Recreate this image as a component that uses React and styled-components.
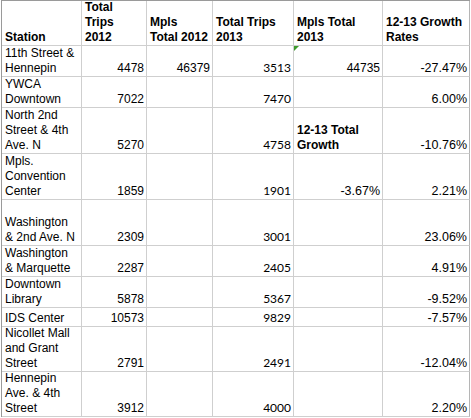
import React from "react"
import styled, { createGlobalStyle } from "styled-components"

const GlobalStyle = createGlobalStyle`
  html, body {
    margin: 0;
    padding: 0;
    background: #fff;
  }
  body {
    font-family: "Liberation Sans", Arial, sans-serif;
    color: #000;
  }
`

const columns = [80, 65, 66, 81, 89, 87]
const rowHeights = [45, 31, 31, 46, 46, 46, 31, 31, 19, 45, 45]

const header = [
  "Station",
  "Total\nTrips\n2012",
  "Mpls\nTotal 2012",
  "Total Trips\n2013",
  "Mpls Total\n2013",
  "12-13 Growth\nRates",
]

const rows = [
  ["11th Street &\nHennepin", "4478", "46379", "3513", "44735", "-27.47%"],
  ["YWCA\nDowntown", "7022", "", "7470", "", "6.00%"],
  ["North 2nd\nStreet & 4th\nAve. N", "5270", "", "4758", "12-13 Total\nGrowth", "-10.76%"],
  ["Mpls.\nConvention\nCenter", "1859", "", "1901", "-3.67%", "2.21%"],
  ["Washington\n& 2nd Ave. N", "2309", "", "3001", "", "23.06%"],
  ["Washington\n& Marquette", "2287", "", "2405", "", "4.91%"],
  ["Downtown\nLibrary", "5878", "", "5367", "", "-9.52%"],
  ["IDS Center", "10573", "", "9829", "", "-7.57%"],
  ["Nicollet Mall\nand Grant\nStreet", "2791", "", "2491", "", "-12.04%"],
  ["Hennepin\nAve. & 4th\nStreet", "3912", "", "4000", "", "2.20%"],
]

const App = () => {
  return (
    <>
      <GlobalStyle />
      <Page>
        <Sheet>
          {header.map((text, i) => (
            <Cell key={"h" + i} $bold>
              <span>{text}</span>
            </Cell>
          ))}
          {rows.map((row, r) =>
            row.map((text, c) => {
              const isLabel = c === 0 || (r === 2 && c === 4)
              return (
                <Cell
                  key={r + "-" + c}
                  $right={!isLabel}
                  $bold={r === 2 && c === 4}
                  $calibri={c === 3}
                  $percent={text.endsWith("%")}
                >
                  {r === 0 && c === 4 && <CommentMark />}
                  <span>{text}</span>
                </Cell>
              )
            })
          )}
        </Sheet>
      </Page>
    </>
  )
}

export default App

const Page = styled.div`
  padding-left: 1px;
`

const Sheet = styled.div`
  display: grid;
  grid-template-columns: ${columns.map((w) => w + "px").join(" ")};
  grid-template-rows: ${rowHeights.map((h) => h + "px").join(" ")};
  width: max-content;
  border-top: 1px solid #9a9a9a;
  border-left: 1px solid #9a9a9a;
`

const Cell = styled.div`
  position: relative;
  box-sizing: border-box;
  display: flex;
  align-items: flex-end;
  justify-content: ${(p) => (p.$right ? "flex-end" : "flex-start")};
  padding: 0 2px ${(p) => (p.$calibri ? "1px" : "0")} 3px;
  overflow: hidden;
  border-right: 1px solid #cfcfcf;
  border-bottom: 1px solid #cfcfcf;
  font-family: ${(p) =>
    p.$calibri ? "Lato, \"Open Sans\", sans-serif" : "\"Liberation Sans\", Arial, sans-serif"};
  font-size: ${(p) => (p.$percent ? "12.5px" : "12px")};
  font-weight: ${(p) => (p.$bold ? 700 : 400)};
  line-height: 15px;
  white-space: pre;
  text-align: ${(p) => (p.$right ? "right" : "left")};

  &:nth-child(6n) {
    border-right-color: #b5b5b5;
  }
`

const CommentMark = styled.i`
  position: absolute;
  top: 0;
  left: 0;
  width: 0;
  height: 0;
  border-top: 5px solid #3d9a2c;
  border-right: 5px solid transparent;
`
